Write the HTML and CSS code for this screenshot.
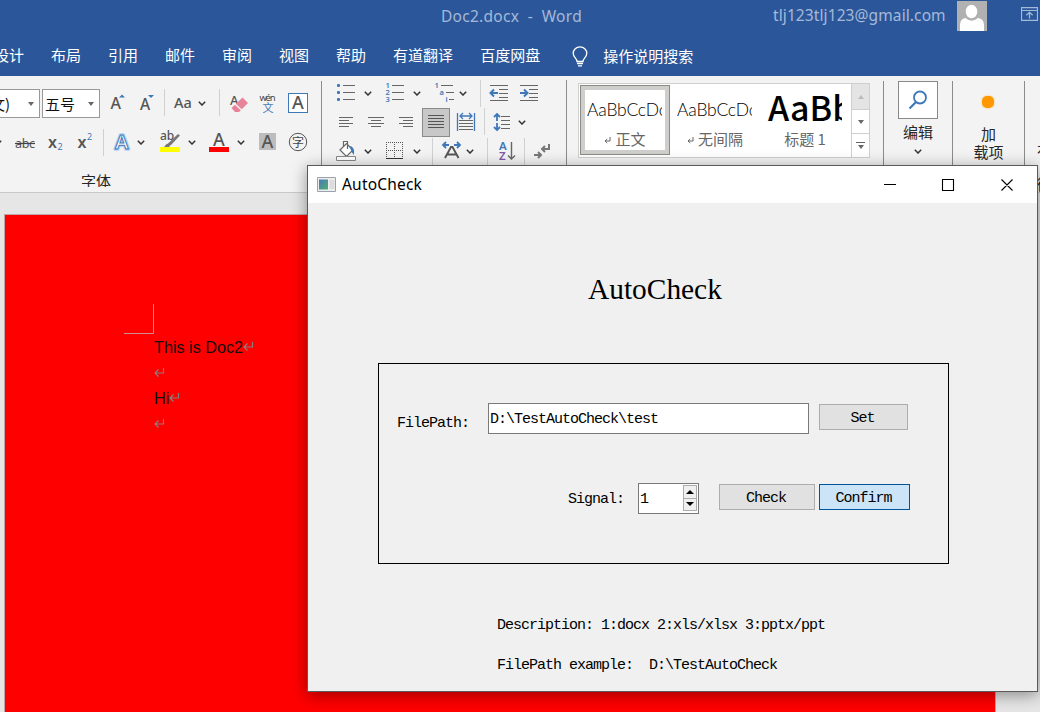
FILE: index.html
```html
<!DOCTYPE html>
<html lang="zh-CN">
<head>
<meta charset="utf-8">
<title>Doc2.docx - Word</title>
<link rel="stylesheet" href="styles.css">
</head>
<body>
<svg class="defs" width="0" height="0">
  <symbol id="chev" viewBox="0 0 8 5"><path d="M.8.8 4 4 7.200.8" fill="none" stroke="#333" stroke-width="1.5"/></symbol>
  <symbol id="ret" viewBox="0 0 11 9"><path d="M9.500 0V5H1M4.500 1.500 1 5l3.500 3.500" fill="none" stroke="#8a8080" stroke-width="1.1"/></symbol>
</svg>
<header class="head">
  <div class="titlebar">
    <span class="doc-name">Doc2.docx&nbsp; -&nbsp; Word</span>
    <span class="account">tlj123tlj123@gmail.com</span>
    <svg class="avatar" width="30" height="30" viewBox="0 0 30 30"><path fill="#b1b1b1" d="M0 0h30v30H0z"/><ellipse cx="14.500" cy="10.500" rx="5.800" ry="6.700" fill="#fff"/><path fill="#fff" d="M3 30V24q0-6 5.500-7 6 5.500 12.500 0 6 1 6 7v6z"/></svg>
    <svg class="ribbon-opt" width="17" height="14" viewBox="0 0 17 14"><path d="M.5.7h16v12.600H.5zM.5 3.500h16M8.500 11.500v-6M5.300 8.300l3.200-3 3.200 3" fill="none" stroke="#a5b9d8" stroke-width="1.200"/></svg>
  </div>
  <nav class="tabs">
    <span>设计</span><span>布局</span><span>引用</span><span>邮件</span><span>审阅</span><span>视图</span><span>帮助</span><span>有道翻译</span><span>百度网盘</span>
    <svg class="bulb" width="16" height="21" viewBox="0 0 16 21"><path d="M5 15.500C5 12 1.200 11.500 1.200 7.300a6.800 6.500 0 0 1 13.600 0C14.800 11.500 11 12 11 15.500zM5 17.500h6M6 19.800h4" fill="none" stroke="#fff" stroke-width="1.300"/></svg>
    <span class="tell">操作说明搜索</span>
  </nav>
</header>

<section class="ribbon">
  <div class="group font-group">
    <div class="font-row1">
      <div class="combo combo-name"><span>文)</span><i class="tri"></i></div>
      <div class="combo combo-size"><span>五号</span><i class="tri"></i></div>
      <svg width="64" height="28" viewBox="100 89 64 28"><g class="g-latin"><text x="110.500" y="109" font-size="16">A</text><text x="140" y="110" font-size="15.500">A</text></g><path d="M119 97.500l3-3 3 3zM148 95h6l-3 3z" fill="#3f78b8"/></svg>
      <i class="sep"></i>
      <svg width="54" height="28" viewBox="165 89 54 28"><text class="g-latin" x="174" y="108" font-size="14.500">Aa</text><use href="#chev" x="198" y="101" width="8" height="5"/></svg>
      <i class="sep"></i>
      <svg width="101" height="28" viewBox="220 89 101 28"><text class="g-latin" x="230" y="105" font-size="13">A</text><path d="M242.500 97.500l5.500 5.500-9 9h-4l-3.500-4z" fill="#e8839a"/><path d="M235 104l6.500 6" stroke="#f3f3f3" stroke-width="1.400"/><text x="259.500" y="101" font-size="9.500" textLength="16" fill="#444" class="sans">wén</text><text x="262.500" y="111.500" font-size="11" class="cjk" fill="#3f78b8">文</text><rect x="288.500" y="93.500" width="19" height="19" fill="#fff" stroke="#3f78b8"/><text class="g-latin" x="292" y="109" font-size="18">A</text></svg>
    </div>
    <div class="font-row2">
      <svg width="103" height="28" viewBox="0 129 103 28"><use href="#chev" x="-6" y="140" width="8" height="5"/><text class="g-latin thin" x="15" y="148" font-size="12.500" textLength="20">abc</text><path d="M15 143.500h20" stroke="#444" stroke-width="1.200"/><g class="g-latin bold"><text x="48" y="148" font-size="16">x</text><text x="77.500" y="148" font-size="16">x</text></g><g class="sans" fill="#3f78b8" font-size="9"><text x="57.500" y="150">2</text><text x="87" y="140">2</text></g></svg>
      <i class="sep"></i>
      <svg width="217" height="28" viewBox="104 129 217 28">
        <text class="sans" x="115" y="149" font-size="20" font-weight="600" fill="#fff" stroke="#b5d2f0" stroke-width="3.500" stroke-linejoin="round">A</text><text class="sans" x="115" y="149" font-size="20" font-weight="600" fill="#fff" stroke="#3f78b8">A</text>
        <use href="#chev" x="137" y="140" width="8" height="5"/>
        <text class="g-latin" x="160" y="140" font-size="12">ab</text><path d="M178 134l2 1.500-9 9.500-4 2 1-3.500zM164 147l3-3.500 3 2.500-1 1z" fill="#777"/><path d="M160 147h20v5h-20z" fill="#ff0"/>
        <use href="#chev" x="188" y="140" width="8" height="5"/>
        <text class="g-latin" x="213" y="146" font-size="18">A</text><path d="M209 147h20v5h-20z" fill="red"/>
        <use href="#chev" x="237" y="140" width="8" height="5"/>
        <path d="M259 133h17v17h-17z" fill="#bdbdbd"/><text class="g-latin" x="261.500" y="148" font-size="18">A</text>
        <circle cx="298" cy="142" r="8.700" fill="none" stroke="#555"/><text class="cjk" x="292" y="146.500" font-size="12" fill="#444">字</text>
      </svg>
    </div>
    <div class="group-label">字体</div>
  </div>

  <div class="group para-group">
    <div class="para-row">
      <svg width="158" height="27" viewBox="322 80 158 27">
        <g fill="#3f78b8"><rect x="337" y="84" width="3" height="3" rx="1"/><rect x="337" y="91" width="3" height="3" rx="1"/><rect x="337" y="98" width="3" height="3" rx="1"/></g>
        <path d="M343 85.500h12M343 92.500h12M343 99.500h12M392 85.500h12M392 92.500h12M392 99.500h12M441 85.500h12M446 92.500h8M449 99.500h5" stroke="#666"/>
        <g class="sans" font-size="7.500" font-weight="600" fill="#3f78b8"><text x="385.500" y="88">1</text><text x="385.500" y="95">2</text><text x="385.500" y="102">3</text><text x="434.500" y="88">1</text><text x="439.500" y="95">a</text><text x="445.500" y="102">i</text></g>
        <use href="#chev" x="364" y="91" width="8" height="5"/><use href="#chev" x="413" y="91" width="8" height="5"/><use href="#chev" x="459" y="91" width="8" height="5"/>
      </svg>
      <i class="sep"></i>
      <svg width="84" height="27" viewBox="481 80 84 27">
        <path d="M490 85.500h18M499 89.500h9M499 93.500h9M499 97.500h9M490 100.500h18M520 85.500h18M529 89.500h9M529 93.500h9M529 97.500h9M520 100.500h18" stroke="#666"/>
        <path d="M498 93h-7M494 89.500L490.500 93l3.500 3.500M520 93h7M524 89.500l3.500 3.500-3.500 3.500" fill="none" stroke="#3f78b8" stroke-width="2"/>
      </svg>
    </div>
    <div class="para-row">
      <svg width="100" height="29" viewBox="322 108 100 29"><path d="M339 117.500h14M339 120.500h10M339 123.500h14M339 126.500h10M368 117.500h16M371 120.500h10M368 123.500h16M371 126.500h10M399 117.500h14M403 120.500h10M399 123.500h14M403 126.500h10" stroke="#666"/></svg>
      <div class="selected"><svg width="26" height="27" viewBox="423 109 26 27"><path d="M428 115.500h16M428 118.500h16M428 121.500h16M428 124.500h16M428 127.500h16" stroke="#555"/></svg></div>
      <svg width="34" height="29" viewBox="450 108 34 29"><path d="M457.500 113v18M474.500 113v18M460 116h12M463 113l-3 3 3 3M469 113l3 3-3 3" fill="none" stroke="#3f78b8" stroke-width="1.300"/><path d="M459 120.500h14M459 123.500h14M459 126.500h14M459 129.500h14" stroke="#666"/></svg>
      <i class="sep"></i>
      <svg width="79" height="29" viewBox="485 108 79 29"><path d="M497 121v-7M494 117l3-3 3 3M497 123v7M494 127l3 3 3-3" fill="none" stroke="#3f78b8" stroke-width="1.800"/><path d="M501 116.500h9M501 120.500h9M501 124.500h9M501 128.500h9" stroke="#666"/><use href="#chev" x="518" y="120" width="8" height="5"/></svg>
    </div>
    <div class="para-row">
      <svg width="110" height="27" viewBox="322 138 110 27"><path d="M340 150l6.500-6.500 6.500 6.500-6.500 6.500zM343.500 147v-5.500h4V149" fill="#fff" stroke="#666" stroke-width="1.200"/><path d="M349 146q6 0 5 9-2-2-3-5z" fill="#3f78b8"/><path d="M336.500 156.500h19v4h-19z" fill="#fff" stroke="#888"/><use href="#chev" x="364" y="149" width="8" height="5"/>
        <path d="M386.500 142v17M394.500 142v17M402.500 142v17M386 142.500h17M386 150.500h17" fill="none" stroke="#555" stroke-dasharray="1 1"/><path d="M386 158.500h17" stroke="#333"/><use href="#chev" x="413" y="149" width="8" height="5"/></svg>
      <i class="sep"></i>
      <svg width="54" height="27" viewBox="433 138 54 27"><path d="M445 158l6-11h1.500l6 11M447.500 154.500h8.500" fill="none" stroke="#555" stroke-width="1.900"/><path d="M449 145h-6M446 142l-3 3 3 3M454 145h6M457 142l3 3-3 3" fill="none" stroke="#3f78b8" stroke-width="1.800"/><use href="#chev" x="466" y="149" width="8" height="5"/></svg>
      <i class="sep"></i>
      <svg width="36" height="27" viewBox="488 138 36 27"><g class="sans" font-size="11.500" font-weight="600"><text x="499" y="150" fill="#3f78b8">A</text><text x="499" y="160" fill="#8058a8">Z</text></g><path d="M511.500 142v17M508 155.500l3.500 3.500 3.500-3.500" fill="none" stroke="#666" stroke-width="1.400"/></svg>
      <i class="sep"></i>
      <svg width="39" height="27" viewBox="525 138 39 27"><path d="M549 144v5h-7M545 146l-3 3 3 3M534 155h7M538 152l3 3-3 3" fill="none" stroke="#777" stroke-width="2"/></svg>
    </div>
  </div>

  <div class="group style-group">
    <div class="gallery">
      <div class="style-card active"><div class="sample">AaBbCcDc</div><div class="style-name"><svg width="7" height="7" viewBox="0 0 7 7"><path d="M6 0v4H1M3.200 2 1 4l2.200 2" fill="none" stroke="#666"/></svg>正文</div></div>
      <div class="style-card"><div class="sample">AaBbCcDc</div><div class="style-name"><svg width="7" height="7" viewBox="0 0 7 7"><path d="M6 0v4H1M3.200 2 1 4l2.200 2" fill="none" stroke="#666"/></svg>无间隔</div></div>
      <div class="style-card"><div class="sample big">AaBb</div><div class="style-name">标题 1</div></div>
      <div class="scroller">
        <div class="off"><i class="tri up"></i></div><div><i class="tri"></i></div><div class="more"><i class="tri"></i></div>
      </div>
    </div>
  </div>

  <div class="group edit-group">
    <div class="find"><svg width="38" height="36" viewBox="899 82 38 36"><circle cx="920" cy="97.500" r="6" fill="none" stroke="#3f78b8" stroke-width="1.800"/><path d="M916 102l-6.500 6.500" stroke="#3f78b8" stroke-width="2.200"/></svg></div>
    <div class="btn-label">编辑</div>
    <svg class="edit-chev" width="8" height="5"><use href="#chev" width="8" height="5"/></svg>
  </div>

  <div class="group addin-group">
    <i class="dot"></i>
    <div class="btn-label addin">加<br>载项</div>
  </div>
  <div class="cut-group"><span>有</span><span>微</span></div>
</section>

<main class="workspace">
  <article class="page">
    <svg class="crop-mark" width="30" height="30"><path d="M29.500 0v29.500H0" fill="none" stroke="#d09090"/></svg>
    <p>This is Doc2<svg width="11" height="9"><use href="#ret" width="11" height="9"/></svg></p>
    <p><svg width="11" height="9"><use href="#ret" width="11" height="9"/></svg></p>
    <p>Hi<svg width="11" height="9"><use href="#ret" width="11" height="9"/></svg></p>
    <p><svg width="11" height="9"><use href="#ret" width="11" height="9"/></svg></p>
  </article>
</main>

<div class="dialog">
  <div class="dlg-title">
    <svg width="19" height="15" viewBox="0 0 19 15"><defs><linearGradient id="ic" x2="1" y2="1"><stop stop-color="#4c78b8"/><stop offset="1" stop-color="#4fae70"/></linearGradient></defs><path d="M.5.5h18v14H.5z" fill="#eee" stroke="#9aa3ad"/><path d="M2 2.500h9v10H2z" fill="url(#ic)"/><path d="M12.500 3h5v9h-5z" fill="#dcdcdc"/></svg>
    <span class="dlg-name">AutoCheck</span>
    <svg class="win-btns" width="130" height="14" viewBox="884 177 130 14"><path d="M884 183.500h12M942.500 178.500h11v11h-11zM1001.500 178.500l11 11M1012.500 178.500l-11 11" fill="none" stroke="#000" stroke-width="1.100"/></svg>
  </div>
  <h1>AutoCheck</h1>
  <div class="frame">
    <div class="line path-line"><label>FilePath:</label><div class="field path">D:\TestAutoCheck\test</div><div class="button set">Set</div></div>
    <div class="line signal-line"><label>Signal:</label>
      <div class="field spin"><span>1</span><div class="steps"><div><i class="tri up"></i></div><div><i class="tri"></i></div></div></div>
      <div class="button check">Check</div><div class="button confirm">Confirm</div></div>
  </div>
  <div class="hint">Description: 1:docx 2:xls/xlsx 3:pptx/ppt</div>
  <div class="hint">FilePath example:&nbsp; D:\TestAutoCheck</div>
</div>
</body>
</html>
```
FILE: styles.css
```css
* { box-sizing: border-box; }
body { margin: 0; width: 1040px; height: 712px; overflow: hidden; background: #e6e6e6; font-family: "Noto Sans", "Noto Sans CJK SC", sans-serif; color: #262626; display: flex; flex-direction: column; position: relative; }
svg { display: block; flex: none; }
.defs { position: absolute; }
.sans { font-family: "Noto Sans", sans-serif; }
.cjk { font-family: "Noto Sans CJK SC", sans-serif; }
.g-latin { font-family: "Noto Sans", sans-serif; font-weight: 500; fill: #555; }
.g-latin.bold { font-weight: 600; }
.g-latin.thin { font-weight: 400; }

.head { height: 76px; background: #2b579a; flex: none; }
.titlebar { display: flex; height: 33px; color: #a5b9d8; font-size: 15.5px; line-height: 32px; white-space: nowrap; }
.doc-name { margin-left: 441px; width: 332px; letter-spacing: .28px; }
.account { width: 184px; letter-spacing: .1px; line-height: 31px; }
.avatar { margin-top: 1px; }
.ribbon-opt { margin: 7px 0 0 34px; }
.tabs { display: flex; gap: 27px; margin-left: -6px; color: #fff; font: 15px/44px "Noto Sans CJK SC", sans-serif; white-space: nowrap; }
.bulb { margin: 13px -11px 0 5px; }
.tell { line-height: 45px; margin-left: -1px; }

.ribbon { height: 117px; flex: none; background: #f3f3f3; border-bottom: 1px solid #c9c9c9; display: flex; overflow: hidden; }
.group { border-right: 1px solid #8c8c8c; height: 106px; margin-top: 5px; flex: none; }
.sep { width: 1px; height: 27px; background: #d0d0d0; flex: none; }
.tri { width: 0; height: 0; border: 3.5px solid transparent; border-top: 4px solid #666; border-bottom: 0; display: block; }
.tri.up { border-top: 0; border-bottom: 4px solid #666; }
.font-group { width: 322px; overflow: hidden; }
.font-row1 { display: flex; margin-top: 8px; height: 29px; }
.combo { flex: none; height: 29px; background: #fff; border: 1px solid #999; display: flex; align-items: center; justify-content: space-between; padding: 0 5px 0 2px; font: 15px/26px "Noto Sans CJK SC", sans-serif; color: #111; }
.combo-name { width: 41px; margin-left: -1px; margin-right: 2px; overflow: hidden; }
.combo-name span { margin-left: -12px; }
.combo-size { width: 58px; }
.font-row2 { display: flex; margin-top: 11px; height: 28px; }
.group-label { margin: 13px 0 0 81px; font: 15px/22px "Noto Sans CJK SC", sans-serif; }

.para-group { width: 245px; margin-top: 4px; height: 107px; }
.para-row { display: flex; height: 29px; align-items: flex-start; }
.selected { width: 28px; height: 29px; border: 1px solid #8a8a8a; background: #c8c8c8; }
.para-row:nth-child(1) { height: 28px; }
.para-row:nth-child(2) { height: 30px; }

.style-group { width: 317px; padding: 2px 0 0 11px; }
.gallery { width: 292px; height: 75px; border: 1px solid #cfcfcf; background: #fff; display: flex; padding-left: 1px; }
.style-card { width: 90px; height: 70px; margin-top: 1px; padding: 5px 8px 0; text-align: center; overflow: hidden; }
.style-card.active { border: 1px solid #8b8b87; padding: 4px 7px 0; box-shadow: inset 0 0 0 4px #d0cecc; }
.sample { font: 300 17.5px/40px Lato, sans-serif; letter-spacing: -.2px; color: #000; overflow: hidden; white-space: nowrap; width: 75px; height: 35px; text-align: left; margin-left: -1px; }
.sample.big { font: 500 34px/34px "Noto Sans CJK SC", sans-serif; letter-spacing: 0; padding-left: 1px; }
.style-name { font: 15px/24px "Noto Sans CJK SC", sans-serif; color: #666; white-space: nowrap; margin-top: 2px; display: flex; gap: 4px; justify-content: center; }
.style-name svg { margin-top: 10px; }
.scroller { width: 18px; margin-left: 1px; border-left: 1px solid #cfcfcf; }
.scroller div { height: 24px; display: flex; align-items: center; justify-content: center; border-bottom: 1px solid #cfcfcf; }
.scroller .off { height: 26px; background: #e4e4e4; }
.scroller .off .tri { border-bottom-color: #bbb; }
.scroller .more { border-bottom: 0; height: 23px; flex-direction: column; gap: 2px; }
.more::before { content: ""; width: 9px; height: 1px; background: #666; }

.edit-group { width: 69px; display: flex; flex-direction: column; align-items: center; }
.find { width: 40px; height: 38px; border: 1px solid #888; background: #fff; }
.btn-label { font: 15px/18px "Noto Sans CJK SC", sans-serif; text-align: center; margin-top: 4px; }
.edit-chev { margin-top: 8px; }
.addin-group { width: 72px; display: flex; flex-direction: column; align-items: center; }
.dot { width: 12px; height: 12px; border-radius: 5px; background: #ff9800; margin-top: 15px; box-shadow: 0 0 2px #ffb850; margin-left: -1px; }
.btn-label.addin { margin-top: 17px; }
.cut-group { padding: 58px 0 0 12px; font: 15px/33px "Noto Sans CJK SC", sans-serif; display: flex; flex-direction: column; }

.workspace { flex: 1; padding: 21px 0 0 4px; min-height: 0; }
.page { width: 992px; height: 500px; background: red; border: 1px solid #c0a8a8; padding: 89px 0 0 149px; font: 16.2px/25.6px "Liberation Sans", Arial, sans-serif; color: #111; }
.crop-mark { margin-left: -30px; }
.page p { margin: 0; display: flex; align-items: center; height: 25.7px; padding-top: 1px; }
.page p svg { margin-top: -2px; }

.dialog { position: absolute; left: 307px; top: 165px; width: 731px; height: 527px; border: 1px solid #5a5a5a; background: #f0f0f0; box-shadow: 0 3px 15px rgba(0,0,0,.4); color: #000; font: 15px/20px "Liberation Mono", "Courier New", monospace; letter-spacing: -1px; }
.dlg-title { height: 37px; background: #fff; display: flex; align-items: center; padding-left: 9px; }
.dlg-name { font: 15.500px/37px "Noto Sans", sans-serif; letter-spacing: .2px; width: 80px; margin-left: 6px; white-space: nowrap; }
.win-btns { margin-left: 462px; }
.dialog h1 { font: 29.4px/36px "Liberation Serif", "Times New Roman", serif; letter-spacing: 0; margin: 68px 0 0 280px; }
.frame { margin: 56px 0 0 70px; width: 571px; height: 201px; border: 1px solid #000; padding: 39px 0 0 18px; }
.line { display: flex; }
.field { border: 1px solid #7a7a7a; background: #fff; height: 31px; line-height: 31px; padding-left: 1px; }
.button { height: 26px; line-height: 28px; border: 1px solid #adadad; background: #e1e1e1; text-align: center; margin-top: 1px; padding-right: 2px; }
.path-line label { width: 91px; padding-top: 11px; }
.path { width: 321px; margin-right: 10px; }
.set { width: 89px; }
.signal-line { margin-top: 49px; padding-left: 171px; }
.signal-line label { width: 70px; padding-top: 7px; }
.spin { width: 61px; display: flex; justify-content: space-between; margin-right: 20px; padding: 1px 1px 2px 1px; line-height: 29px; }
.steps { width: 14px; display: flex; flex-direction: column; }
.steps div { flex: 1; border: 1px solid #adadad; background: #f0f0f0; display: flex; align-items: center; justify-content: center; }
.steps div + div { border-top: 0; }
.steps .tri { border-width: 0 4px 4px; border-top-color: #000; }
.steps .tri:not(.up) { border-width: 4px 4px 0; }
.steps .tri.up { border-bottom-color: #000; }
.check { width: 96px; margin-right: 4px; }
.confirm { width: 91px; background: #cce4f7; border-color: #005499; }
.hint { margin: 20px 0 0 189px; white-space: pre; }
.frame + .hint { margin-top: 52px; }
```
